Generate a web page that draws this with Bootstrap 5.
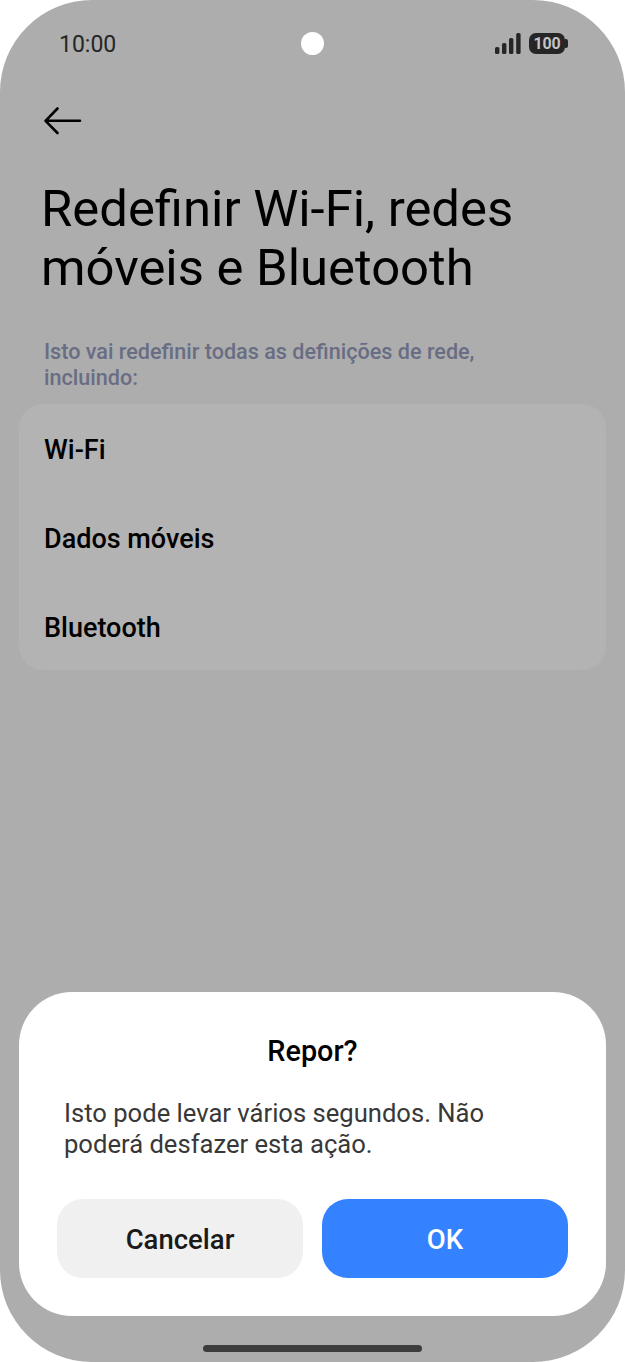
<!doctype html>
<html lang="pt">
<head>
  <meta charset="utf-8">
  <meta name="viewport" content="width=device-width, initial-scale=1">
  <title>Redefinir Wi-Fi</title>
  <link href="https://cdn.jsdelivr.net/npm/bootstrap@5.3.3/dist/css/bootstrap.min.css" rel="stylesheet">
  <style>
    body { background: #fff; font-family: Roboto, "Liberation Sans", sans-serif; }
    .phone { width: 625px; height: 1362px; background: #adadad; border-radius: 92px; overflow: hidden; }
    .status-row { height: 44px; margin-top: 21px; padding: 0 57px 0 59px; }
    .status-row > div { flex: 1 1 0; }
    .clock { font-size: 23px; color: #262626; line-height: 44px; padding-top: 4px; }
    .hole { width: 23px; height: 23px; border-radius: 50%; background: #fff; margin-left: -2px; }
    .batt { width: 36px; height: 21px; background: #262626; border-radius: 7px; color: #c4c4c4; font-size: 16px; font-weight: 700; line-height: 21px; text-align: center; letter-spacing: -.2px; margin-left: 8px; margin-right: 3px; position: relative; }
    .batt::after { content: ""; position: absolute; right: -3px; top: 6px; width: 3px; height: 9px; background: #262626; border-radius: 0 2px 2px 0; }
    .back-row { padding: 41px 0 0 43px; height: 87px; }
    .page-title { font-size: 50.8px; line-height: 59px; font-weight: 400; color: #000; margin: 0; padding: 27px 0 0 41px; }
    .lead-text { font-size: 21.6px; line-height: 26px; font-weight: 500; color: #696d84; margin: 0; padding: 42px 90px 0 44px; }
    .opt-card { margin: 13px 19px 0; height: 266px; padding: 2px 0 0; background: #b3b3b3; border-radius: 24px; border: 0; }
    .opt-card .list-group-item { background: transparent; border: 0; padding: 0 0 0 25px; height: 89px; font-size: 27px; font-weight: 500; color: #000; line-height: 89px; }
    .sheet { margin: 0 19px; height: 324px; background: #fff; border-radius: 53px; padding: 38px 38px 0; }
    .sheet-title { font-size: 28.8px; line-height: 42px; font-weight: 500; color: #000; text-align: center; margin: 0; }
    .sheet-text { font-size: 25.6px; line-height: 31px; color: #383838; margin: 26px 0 0 7px; }
    .sheet-btn { width: 246px; height: 79px; border: 0; border-radius: 26px; font-size: 27.5px; font-weight: 500; padding: 1px 0 0; line-height: 79px; }
    .btn-cancel { background: #f0f0f0; color: #1a1a1a; }
    .btn-cancel:hover, .btn-cancel:active { background: #f0f0f0 !important; color: #1a1a1a !important; }
    .btn-ok { background: #3482ff; color: #fff; }
    .btn-ok:hover, .btn-ok:active { background: #3482ff !important; color: #fff !important; }
    .btn-gap { margin-top: 39px; gap: 19px; }
    .home-wrap { height: 46px; padding-top: 29px; }
    .home-bar { width: 219px; height: 7px; background: #3d3d3d; border-radius: 4px; }
  </style>
</head>
<body class="m-0">
  <div class="phone d-flex flex-column">
    <div class="status-row d-flex align-items-center">
      <div class="clock">10:00</div>
      <span class="hole flex-shrink-0"></span>
      <div class="d-flex justify-content-end align-items-center">
        <svg width="26" height="21" viewBox="0 0 26 21">
          <g fill="#262626">
            <rect x="0" y="14" width="4.4" height="7" rx="1.6"/>
            <rect x="7" y="10" width="4.4" height="11" rx="1.6"/>
            <rect x="14" y="5" width="4.4" height="16" rx="1.6"/>
            <rect x="21.2" y="0" width="4.4" height="21" rx="1.6"/>
          </g>
        </svg>
        <span class="batt">100</span>
      </div>
    </div>
    <div class="back-row">
      <svg width="40" height="30" viewBox="0 0 40 30" class="d-block">
        <path d="M2.5 14.8H37M14.5 2.5 2.5 14.8 14.5 27" fill="none" stroke="#000" stroke-width="2.6" stroke-linecap="round" stroke-linejoin="round"/>
      </svg>
    </div>
    <h1 class="page-title">Redefinir Wi-Fi, redes<br>móveis e Bluetooth</h1>
    <p class="lead-text">Isto vai redefinir todas as definições de rede, incluindo:</p>
    <ul class="list-group opt-card">
      <li class="list-group-item">Wi-Fi</li>
      <li class="list-group-item">Dados móveis</li>
      <li class="list-group-item">Bluetooth</li>
    </ul>
    <div class="flex-grow-1"></div>
    <div class="sheet">
      <h2 class="sheet-title">Repor?</h2>
      <p class="sheet-text">Isto pode levar vários segundos. Não poderá desfazer esta ação.</p>
      <div class="d-flex btn-gap">
        <button type="button" class="btn sheet-btn btn-cancel">Cancelar</button>
        <button type="button" class="btn sheet-btn btn-ok">OK</button>
      </div>
    </div>
    <div class="home-wrap d-flex justify-content-center">
      <div class="home-bar"></div>
    </div>
  </div>
  <script src="https://cdn.jsdelivr.net/npm/bootstrap@5.3.3/dist/js/bootstrap.bundle.min.js"></script>
</body>
</html>
